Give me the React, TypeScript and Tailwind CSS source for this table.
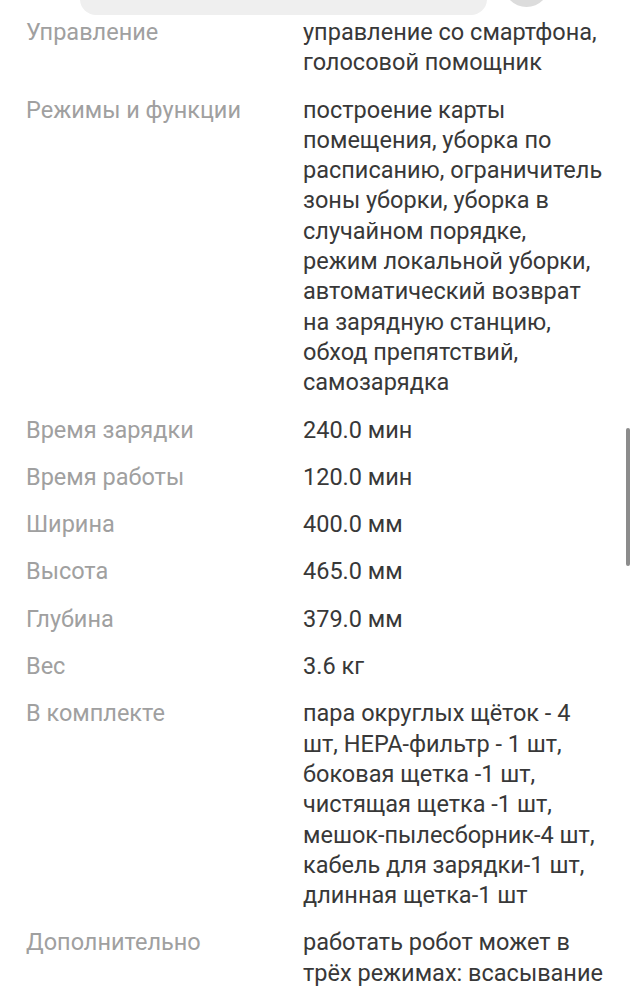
import React from "react";

const rows: { label: string; value: string }[] = [
  { label: "Управление", value: "управление со смартфона, голосовой помощник" },
  {
    label: "Режимы и функции",
    value:
      "построение карты помещения, уборка по расписанию, ограничитель зоны уборки, уборка в случайном порядке, режим локальной уборки, автоматический возврат на зарядную станцию, обход препятствий, самозарядка",
  },
  { label: "Время зарядки", value: "240.0 мин" },
  { label: "Время работы", value: "120.0 мин" },
  { label: "Ширина", value: "400.0 мм" },
  { label: "Высота", value: "465.0 мм" },
  { label: "Глубина", value: "379.0 мм" },
  { label: "Вес", value: "3.6 кг" },
  {
    label: "В комплекте",
    value:
      "пара округлых щёток - 4 шт, HEPA-фильтр - 1 шт, боковая щетка -1 шт, чистящая щетка -1 шт, мешок-пылесборник-4 шт, кабель для зарядки-1 шт, длинная щетка-1 шт",
  },
  {
    label: "Дополнительно",
    value: "работать робот может в трёх режимах: всасывание",
  },
];

export default function App() {
  return (
    <div
      className="relative w-[636px] h-[1000px] overflow-hidden bg-white"
      style={{ fontFamily: "Roboto, 'Noto Sans', sans-serif" }}
    >
      <div className="absolute left-[80px] top-[-30px] w-[407px] h-[45px] rounded-[16px] bg-[#efefef]" />
      <div className="absolute left-[503px] top-[-40px] w-[47px] h-[47px] rounded-full bg-[#dcdcdc]" />
      <div className="absolute left-[626px] top-[428px] w-[4px] h-[138px] rounded-full bg-[#8c8c8c]" />

      <div className="flex flex-col gap-[17px] pt-[17px] pl-[26px] text-[23.5px] leading-[30.3px]">
        {rows.map((r) => (
          <div key={r.label} className="grid grid-cols-[277px_302px]">
            <div className="text-[#a0a0a0]">{r.label}</div>
            <div className="text-[#383838]">{r.value}</div>
          </div>
        ))}
      </div>
    </div>
  );
}
